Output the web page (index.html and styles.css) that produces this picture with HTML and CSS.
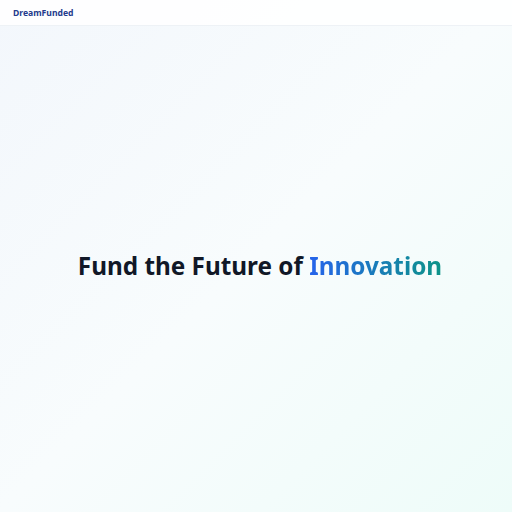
FILE: index.html
```html
<!DOCTYPE html>
<html lang="en">
<head>
<meta charset="utf-8">
<title>DreamFunded</title>
<link rel="stylesheet" href="styles.css">
</head>
<body>
<div class="page">
  <header class="header">
    <div class="logo">DreamFunded</div>
  </header>
  <main class="hero">
    <h1 class="title">Fund the Future of <span class="accent">Innovation</span></h1>
  </main>
</div>
</body>
</html>
```
FILE: styles.css
```css
html, body {
  margin: 0;
  padding: 0;
  height: 100%;
}
body {
  font-family: "Noto Sans", "Open Sans", sans-serif;
  background: linear-gradient(135deg, #f3f7fc 0%, #f8fcfd 50%, #eefcf9 100%);
}
.page {
  min-height: 100%;
  display: flex;
  flex-direction: column;
}
.header {
  height: 26px;
  box-sizing: border-box;
  padding: 0 13px;
  display: flex;
  align-items: center;
  background: rgba(255, 255, 255, 0.85);
  border-bottom: 1px solid #eef2f6;
}
.logo {
  font-size: 8.6px;
  font-weight: 700;
  color: #243b8c;
}
.hero {
  flex: 1;
  display: flex;
  align-items: center;
  justify-content: center;
  padding: 0 0 8px 8px;
}
.title {
  margin: 0;
  font-size: 24.3px;
  font-weight: 700;
  color: #111827;
}
.accent {
  background: linear-gradient(90deg, #2563eb, #0d9488);
  -webkit-background-clip: text;
  background-clip: text;
  color: transparent;
}
```
